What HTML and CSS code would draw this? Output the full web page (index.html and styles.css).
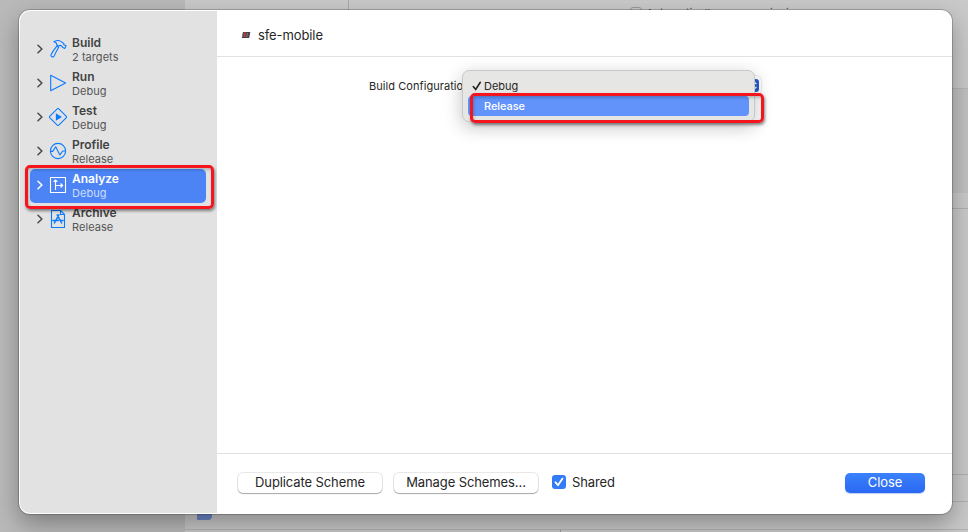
FILE: index.html
```html
<!DOCTYPE html>
<html lang="en">
<head>
<meta charset="utf-8">
<title>sfe-mobile</title>
<link rel="stylesheet" href="styles.css">
</head>
<body>
<div class="screen">
  <div class="backdrop" aria-hidden="true">
    <div class="back-nav"></div>
    <div class="back-main">
      <div class="back-top"><i class="back-check"></i><span class="back-text">Automatically manage signing</span></div>
      <div class="back-card"></div>
      <div class="back-row"></div>
      <div class="back-row tall"></div>
      <div class="back-row short"></div>
      <div class="back-row thin"></div>
      <div class="back-foot"><i class="back-tag"></i></div>
    </div>
  </div>

  <main class="dialog">
    <nav class="sidebar">
      <div class="item">
        <svg class="chevron" viewBox="0 0 6 10"><path d="M1 1.3 4.9 5 1 8.7"/></svg>
        <svg class="icon" viewBox="0 0 18 18"><path d="M4.8 1.8C7.3.3 10.2.2 12.2 1.6L14.8 3.5 14.9 4.7 17.1 5.7 15.8 8.4 13.4 7.3 12.7 5.8 10.5 5.4 9.4 6.1 7.7 4.8C7.8 3.1 6.5 2.1 4.8 1.8Z"/><path d="M7.8 6.1 9.7 7.2C7.8 10.5 6.3 13.2 5.1 16.1 4.5 17.8 1.2 16.5 2 14.7 3.3 12.1 5.6 8.9 7.8 6.1Z"/></svg>
        <div class="label"><b>Build</b><span>2 targets</span></div>
      </div>
      <div class="item">
        <svg class="chevron" viewBox="0 0 6 10"><path d="M1 1.3 4.9 5 1 8.7"/></svg>
        <svg class="icon" viewBox="0 0 18 18"><path d="M1.7 1.3V16.7L16.6 9Z"/></svg>
        <div class="label"><b>Run</b><span>Debug</span></div>
      </div>
      <div class="item">
        <svg class="chevron" viewBox="0 0 6 10"><path d="M1 1.3 4.9 5 1 8.7"/></svg>
        <svg class="icon" viewBox="0 0 18 18"><path d="M8.2.9Q9 .1 9.8.9L17.1 8.2Q17.9 9 17.1 9.8L9.8 17.1Q9 17.9 8.2 17.1L.9 9.8Q.1 9 .9 8.2Z"/><path class="solid" d="M6.9 5.3V12.7L12.9 9Z"/></svg>
        <div class="label"><b>Test</b><span>Debug</span></div>
      </div>
      <div class="item">
        <svg class="chevron" viewBox="0 0 6 10"><path d="M1 1.3 4.9 5 1 8.7"/></svg>
        <svg class="icon" viewBox="0 0 18 18"><circle cx="9" cy="9" r="7.6"/><path d="M1.4 9.4H3.7L6.7 4.8 10.9 12.9 13.7 9H16.6"/></svg>
        <div class="label"><b>Profile</b><span>Release</span></div>
      </div>
      <div class="item selected">
        <svg class="chevron" viewBox="0 0 6 10"><path d="M1 1.3 4.9 5 1 8.7"/></svg>
        <svg class="icon" viewBox="0 0 18 18"><rect x="1.5" y="1.5" width="15" height="15"/><path d="M6.5 14V4M4.6 5.9 6.5 4 8.4 5.9M6.5 9.5H13.5M11.6 7.5 13.6 9.5 11.6 11.5"/></svg>
        <div class="label"><b>Analyze</b><span>Debug</span></div>
      </div>
      <div class="item">
        <svg class="chevron" viewBox="0 0 6 10"><path d="M1 1.3 4.9 5 1 8.7"/></svg>
        <svg class="icon" viewBox="0 0 18 18"><path d="M2.5.5H11.6L15.5 4.4V17.5H2.5ZM11.5.5V4.5H15.5"/><path class="heavy" d="M8.2 4.8 12.6 13M9.9 4.8 5.4 13M3.9 10.6H9.4M11.8 10.6H14.1"/></svg>
        <div class="label"><b>Archive</b><span>Release</span></div>
      </div>
    </nav>

    <section class="content">
      <header class="titlebar">
        <svg class="app-icon" viewBox="0 0 10 8"><path fill="#4a4246" d="M2 1H9.3L8.2 7H.8Z"/><path fill="#d03a40" d="M3.2 1.4H4.8L4 6H2.4Z"/><path fill="#8a868c" d="M6 2H6.9L6.1 6H5.2ZM1.7 2.2H2.3L1.6 5.6H1Z"/></svg>
        <span>sfe-mobile</span>
      </header>
      <div class="form">
        <label class="field-label">Build Configuratio</label>
        <div class="select"><svg class="stepper" viewBox="0 0 12 13"><path d="M4.6 5 7 2.8 9.4 5M4.6 8 7 10.2 9.4 8"/></svg></div>
        <div class="menu">
          <div class="option"><svg class="tick" viewBox="0 0 10 10"><path d="M1.3 5.5 3.7 8.5 8.3 1.3"/></svg><span>Debug</span></div>
          <div class="option active"><span>Release</span></div>
        </div>
        <div class="mark mark-option"></div>
      </div>
      <footer class="actions">
        <button class="btn duplicate"><span>Duplicate Scheme</span></button>
        <button class="btn manage"><span>Manage Schemes...</span></button>
        <span class="shared"><svg class="checkbox" viewBox="0 0 14 14"><path d="M3.5 7.3 6 10.2 10.5 3.6"/></svg><span>Shared</span></span>
        <button class="btn close"><span>Close</span></button>
      </footer>
    </section>
    <div class="mark mark-item"></div>
  </main>
</div>
</body>
</html>
```

FILE: styles.css
```css
* { box-sizing: border-box; }

body {
  margin: 0;
  font-family: Inter, "Liberation Sans", sans-serif;
  color: #262626;
}

.screen {
  position: relative;
  width: 968px;
  height: 532px;
  padding: 10px 16px 18px 19px;
  overflow: hidden;
}

/* Dimmed window behind the dialog */
.backdrop { position: absolute; inset: 0; display: flex; }
.back-nav { width: 185px; background: #b9b9b9; }
.back-main { flex: 1; background: #c9c9c9; }
.back-top {
  display: flex;
  align-items: flex-start;
  height: 88px;
  margin-left: 163px;
  padding: 7px 0 0 281px;
  border-left: 1px solid #a9a9a9;
}
.back-check { width: 12px; height: 12px; border: 1px solid #999; border-radius: 3px; }
.back-text { margin-left: 4px; font-size: 11px; line-height: 12px; color: #555; }
.back-card { height: 105px; background: #c0c0c0; border-top: 1px solid #b5b5b5; }
.back-row { height: 16px; border-bottom: 1px solid #b0b0b0; }
.back-row.tall { height: 266px; }
.back-row.short { height: 27px; }
.back-row.thin { height: 28px; }
.back-foot { height: 2px; width: 376px; border-right: 1px solid #999; }
.back-tag {
  position: absolute;
  left: 197px;
  top: 508px;
  width: 15px;
  height: 12px;
  background: #6e87c8;
  border-radius: 0 0 4px 1px;
}

.dialog {
  position: relative;
  display: flex;
  height: 504px;
  border-radius: 11px;
  background: #fff;
  box-shadow: 0 0 0 1px rgba(0,0,0,.2), 0 10px 24px rgba(0,0,0,.32);
}

.sidebar {
  width: 197px;
  margin: 1px 0 1px 1px;
  padding: 22px 11px 0 10px;
  background: #e2e2e2;
  border-radius: 10px 0 0 10px;
}
.item { display: flex; height: 34px; padding-left: 6.5px; border-radius: 5px; color: #424242; }
.chevron { width: 6px; height: 10px; margin-top: 11px; fill: none; stroke: #484848; stroke-width: 1.5; stroke-linecap: round; stroke-linejoin: round; }
.icon { width: 18px; height: 18px; margin: 7px 5px 0 6.5px; fill: none; stroke: #0a7aff; stroke-width: 1.1; stroke-linejoin: round; }
.icon .solid { fill: #0a7aff; stroke: none; }
.icon .heavy { stroke-width: 1.5; stroke-linecap: round; }
.label { display: flex; flex-direction: column; padding-top: 3px; white-space: nowrap; }
.label b { font-size: 12px; font-weight: 600; line-height: 14px; }
.label span { font-size: 11px; line-height: 15px; color: #555; letter-spacing: .05px; }
.selected { background: #4c84f6; }
.selected .chevron, .selected .icon { stroke: #fff; }
.selected b { color: #fff; }
.selected .label span { color: #ccdcfd; }

.content { flex: 1; display: flex; flex-direction: column; }
.titlebar {
  display: flex;
  align-items: center;
  height: 47px;
  padding: 4px 0 0 24px;
  border-bottom: 1px solid #e2e2e2;
  font-size: 13px;
  letter-spacing: -.1px;
}
.app-icon { width: 10px; height: 8px; margin-right: 7px; }
.form { position: relative; flex: 1; display: flex; align-items: flex-start; padding: 19px 0 0 152px; }
.field-label { width: 94px; font-size: 11px; line-height: 20px; letter-spacing: .06px; white-space: nowrap; }
.select {
  display: flex;
  justify-content: flex-end;
  width: 298px;
  height: 19px;
  padding: 3px 2px;
  border-radius: 5px;
  background: #fff;
  box-shadow: 0 0 1px 1px rgba(0,0,0,.08);
}
.stepper { width: 12px; height: 13px; border-radius: 3px; background: #275ed2; fill: none; stroke: #fff; stroke-width: 1.3; }
.menu {
  position: absolute;
  left: 245px;
  top: 13px;
  width: 293px;
  height: 52px;
  padding: 5px;
  border: 1px solid #c9c9c8;
  border-radius: 7px;
  background: #e6e6e4;
  box-shadow: 0 5px 18px rgba(0,0,0,.24);
  font-size: 11px;
}
.option { display: flex; align-items: center; height: 20px; padding-left: 16px; border-radius: 4px; }
.tick { width: 10px; height: 10px; margin: 0 2px 0 -12px; fill: none; stroke: #222; stroke-width: 1.6; stroke-linecap: round; }
.active { color: #fff; font-weight: 500; background: #6193fb; letter-spacing: -.08px; }

.actions {
  display: flex;
  align-items: flex-start;
  height: 61px;
  padding: 19px 27px 0 21px;
  border-top: 1px solid #e2e2e2;
  font-size: 13px;
  letter-spacing: -.1px;
}
.btn {
  height: 20px;
  padding: 0 0 2px;
  border: 0;
  border-radius: 5px;
  background: #fff;
  color: #262626;
  font: 13px/18px Inter, sans-serif;
  letter-spacing: -.1px;
  white-space: nowrap;
  box-shadow: 0 0 0 1px rgba(0,0,0,.09), 0 1px 1px rgba(0,0,0,.28);
}
.duplicate { width: 144px; }
.manage { width: 144px; margin-left: 12px; }
.shared { display: flex; align-items: center; height: 18px; margin-left: 14px; }
.checkbox { width: 14px; height: 14px; margin: 0 6px 0 0; border-radius: 3px; background: #347bf8; fill: none; stroke: #fff; stroke-width: 1.8; stroke-linecap: round; stroke-linejoin: round; }
.close { width: 80px; margin-left: auto; color: #fff; background: linear-gradient(#3b82fb, #2a67f3); box-shadow: 0 1px 1px rgba(40,90,220,.3); }

/* Red highlight frames */
.mark { position: absolute; border: 3px solid #f5151e; border-radius: 5px; box-shadow: 1px 2px 3px rgba(0,0,0,.45), inset 1px 2px 3px rgba(0,0,0,.2); }
.mark-option { left: 253px; top: 36px; width: 294px; height: 30px; }
.mark-item { left: 6px; top: 155px; width: 189px; height: 44px; }
```
